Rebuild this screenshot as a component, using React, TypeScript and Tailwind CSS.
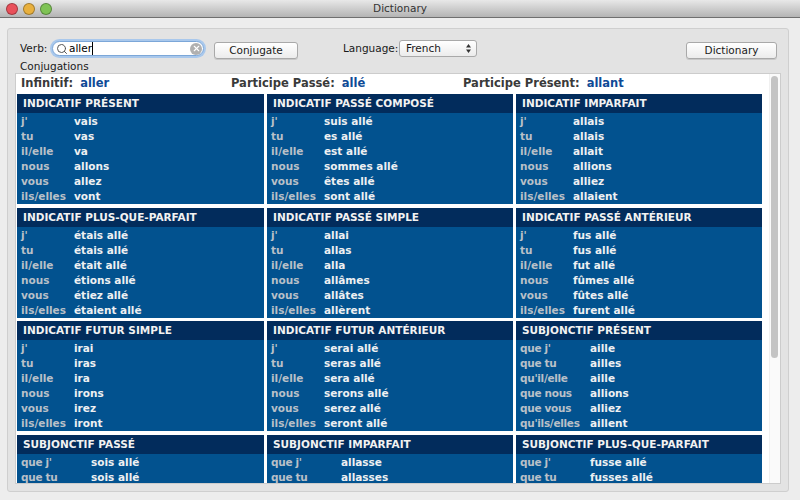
import { Search, X } from "lucide-react";

type Block = { title: string; rows: [string, string][]; wide?: boolean };

const std = ["j'", "tu", "il/elle", "nous", "vous", "ils/elles"];
const sub = ["que j'", "que tu", "qu'il/elle", "que nous", "que vous", "qu'ils/elles"];

function mk(title: string, forms: string[], p = std): Block {
  return { title, rows: forms.map((f, i) => [p[i], f] as [string, string]), wide: p === sub };
}

const blocks: Block[] = [
  mk("INDICATIF PRÉSENT", ["vais", "vas", "va", "allons", "allez", "vont"]),
  mk("INDICATIF PASSÉ COMPOSÉ", ["suis allé", "es allé", "est allé", "sommes allé", "êtes allé", "sont allé"]),
  mk("INDICATIF IMPARFAIT", ["allais", "allais", "allait", "allions", "alliez", "allaient"]),
  mk("INDICATIF PLUS-QUE-PARFAIT", ["étais allé", "étais allé", "était allé", "étions allé", "étiez allé", "étaient allé"]),
  mk("INDICATIF PASSÉ SIMPLE", ["allai", "allas", "alla", "allâmes", "allâtes", "allèrent"]),
  mk("INDICATIF PASSÉ ANTÉRIEUR", ["fus allé", "fus allé", "fut allé", "fûmes allé", "fûtes allé", "furent allé"]),
  mk("INDICATIF FUTUR SIMPLE", ["irai", "iras", "ira", "irons", "irez", "iront"]),
  mk("INDICATIF FUTUR ANTÉRIEUR", ["serai allé", "seras allé", "sera allé", "serons allé", "serez allé", "seront allé"]),
  mk("SUBJONCTIF PRÉSENT", ["aille", "ailles", "aille", "allions", "alliez", "aillent"], sub),
  mk("SUBJONCTIF PASSÉ", ["sois allé", "sois allé"], sub),
  mk("SUBJONCTIF IMPARFAIT", ["allasse", "allasses"], sub),
  mk("SUBJONCTIF PLUS-QUE-PARFAIT", ["fusse allé", "fusses allé"], sub),
];

function Tense({ block }: { block: Block }) {
  return (
    <div className="bg-[#02528f]">
      <div className="h-[19px] bg-[#022c5c] pl-[6px] text-[10.5px] leading-[19px] font-bold text-[#f2f2f2]">
        {block.title}
      </div>
      <div className="pt-px pl-[4px]">
        {block.rows.map(([who, form], i) => (
          <div key={i} className="flex h-[15px] text-[10.5px] leading-[15px] font-bold">
            <span className={`${block.wide ? "w-[70px] tracking-[-0.3px]" : "w-[53px]"} shrink-0 whitespace-nowrap text-[#b9c0c8]`}>{who}</span>
            <span className="text-[#eef0f2]">{form}</span>
          </div>
        ))}
      </div>
    </div>
  );
}

function Light({ color }: { color: string }) {
  return <div className={`h-[12px] w-[12px] rounded-full border border-black/30 ${color}`} />;
}

function MacButton({ label, width }: { label: string; width: string }) {
  return (
    <button className={`h-[17px] ${width} shrink-0 rounded-[3px] border border-[#a9a9a9] bg-gradient-to-b from-white to-[#ececec] text-[10.5px] leading-[15px] text-[#1a1a1a] shadow-[0_1px_0_#c8c8c8]`}>
      {label}
    </button>
  );
}

export default function App() {
  return (
    <div className="flex h-[500px] w-[800px] flex-col overflow-hidden bg-[#ededed] font-['DejaVu_Sans',sans-serif] text-[#1a1a1a]">
      <div className="relative flex h-[18px] shrink-0 items-center justify-center border-b border-[#6f6f6f] bg-gradient-to-b from-[#e8e8e8] to-[#b4b4b4]">
        <div className="absolute top-[3px] left-[6px] flex gap-[5px]">
          <Light color="bg-[#e9505a]" />
          <Light color="bg-[#e8b03e]" />
          <Light color="bg-[#7fc355]" />
        </div>
        <span className="text-[10.5px] text-[#333]">Dictionary</span>
      </div>

      <div className="mt-[10px] mr-[11px] ml-[7px] flex h-[464px] flex-col rounded-[3px] border border-[#cfcfcf] bg-[#e3e3e3] px-[7px]">
        <div className="mt-[11px] flex h-[17px] items-center">
          <span className="ml-[5px] w-[32px] shrink-0 text-[10.5px]">Verb:</span>
          <div className="flex h-[15px] w-[152px] shrink-0 items-center rounded-full border border-[#7ca7d8] bg-white pr-px pl-[3px] shadow-[0_0_0_2px_#a9c8ec]">
            <Search className="h-[12px] w-[12px] text-[#555]" strokeWidth={2} />
            <span className="ml-px text-[10.5px] leading-[13px] text-black">aller</span>
            <span className="h-[13px] w-px bg-black" />
            <span className="ml-auto flex h-[12px] w-[12px] items-center justify-center rounded-full bg-[#b0b0b0]">
              <X className="h-[9px] w-[9px] text-white" strokeWidth={3} />
            </span>
          </div>
          <div className="ml-[10px]"><MacButton label="Conjugate" width="w-[84px]" /></div>
          <span className="ml-[45px] w-[56px] shrink-0 text-[10.5px]">Language:</span>
          <div className="relative flex h-[17px] w-[78px] shrink-0 items-center rounded-[3px] border border-[#a9a9a9] bg-gradient-to-b from-white to-[#ececec] pl-[6px] text-[10.5px]">
            French
            <svg className="absolute top-[3px] right-[5px]" width="5" height="9" viewBox="0 0 5 9" fill="#333">
              <polygon points="2.5,0 5,3.5 0,3.5" />
              <polygon points="0,5.5 5,5.5 2.5,9" />
            </svg>
          </div>
          <div className="mr-[4px] ml-auto"><MacButton label="Dictionary" width="w-[91px]" /></div>
        </div>

        <div className="mt-[2px] ml-[5px] h-[14px] text-[10.5px] leading-[14px]">Conjugations</div>

        <div className="relative flex h-[411px] overflow-hidden border border-[#cccccc] bg-white">
          <div className="w-[753px] shrink-0 pl-px">
            <div className="flex h-[19px] items-center text-[11.5px] font-bold">
              <div className="w-[214px] pl-[4px] text-[#3a3a3a]">
                Infinitif:<span className="ml-[7px] text-[#0f4a96]">aller</span>
              </div>
              <div className="w-[232px] text-[#3a3a3a]">
                Participe Passé:<span className="ml-[7px] text-[#0f4a96]">allé</span>
              </div>
              <div className="text-[#3a3a3a]">
                Participe Présent:<span className="ml-[7px] text-[#0f4a96]">allant</span>
              </div>
            </div>
            <div className="grid grid-cols-[247px_246px_246px] gap-x-[3px] gap-y-[3.5px] pt-px">
              {blocks.map((b) => (
                <Tense key={b.title} block={b} />
              ))}
            </div>
          </div>
          <div className="flex-1 border-l border-[#f0f0f0] bg-[#fafafa]" />
          <div className="absolute top-[2px] right-[2px] h-[282px] w-[7px] rounded-full bg-[#c4c4c4]" />
        </div>
      </div>
    </div>
  );
}
